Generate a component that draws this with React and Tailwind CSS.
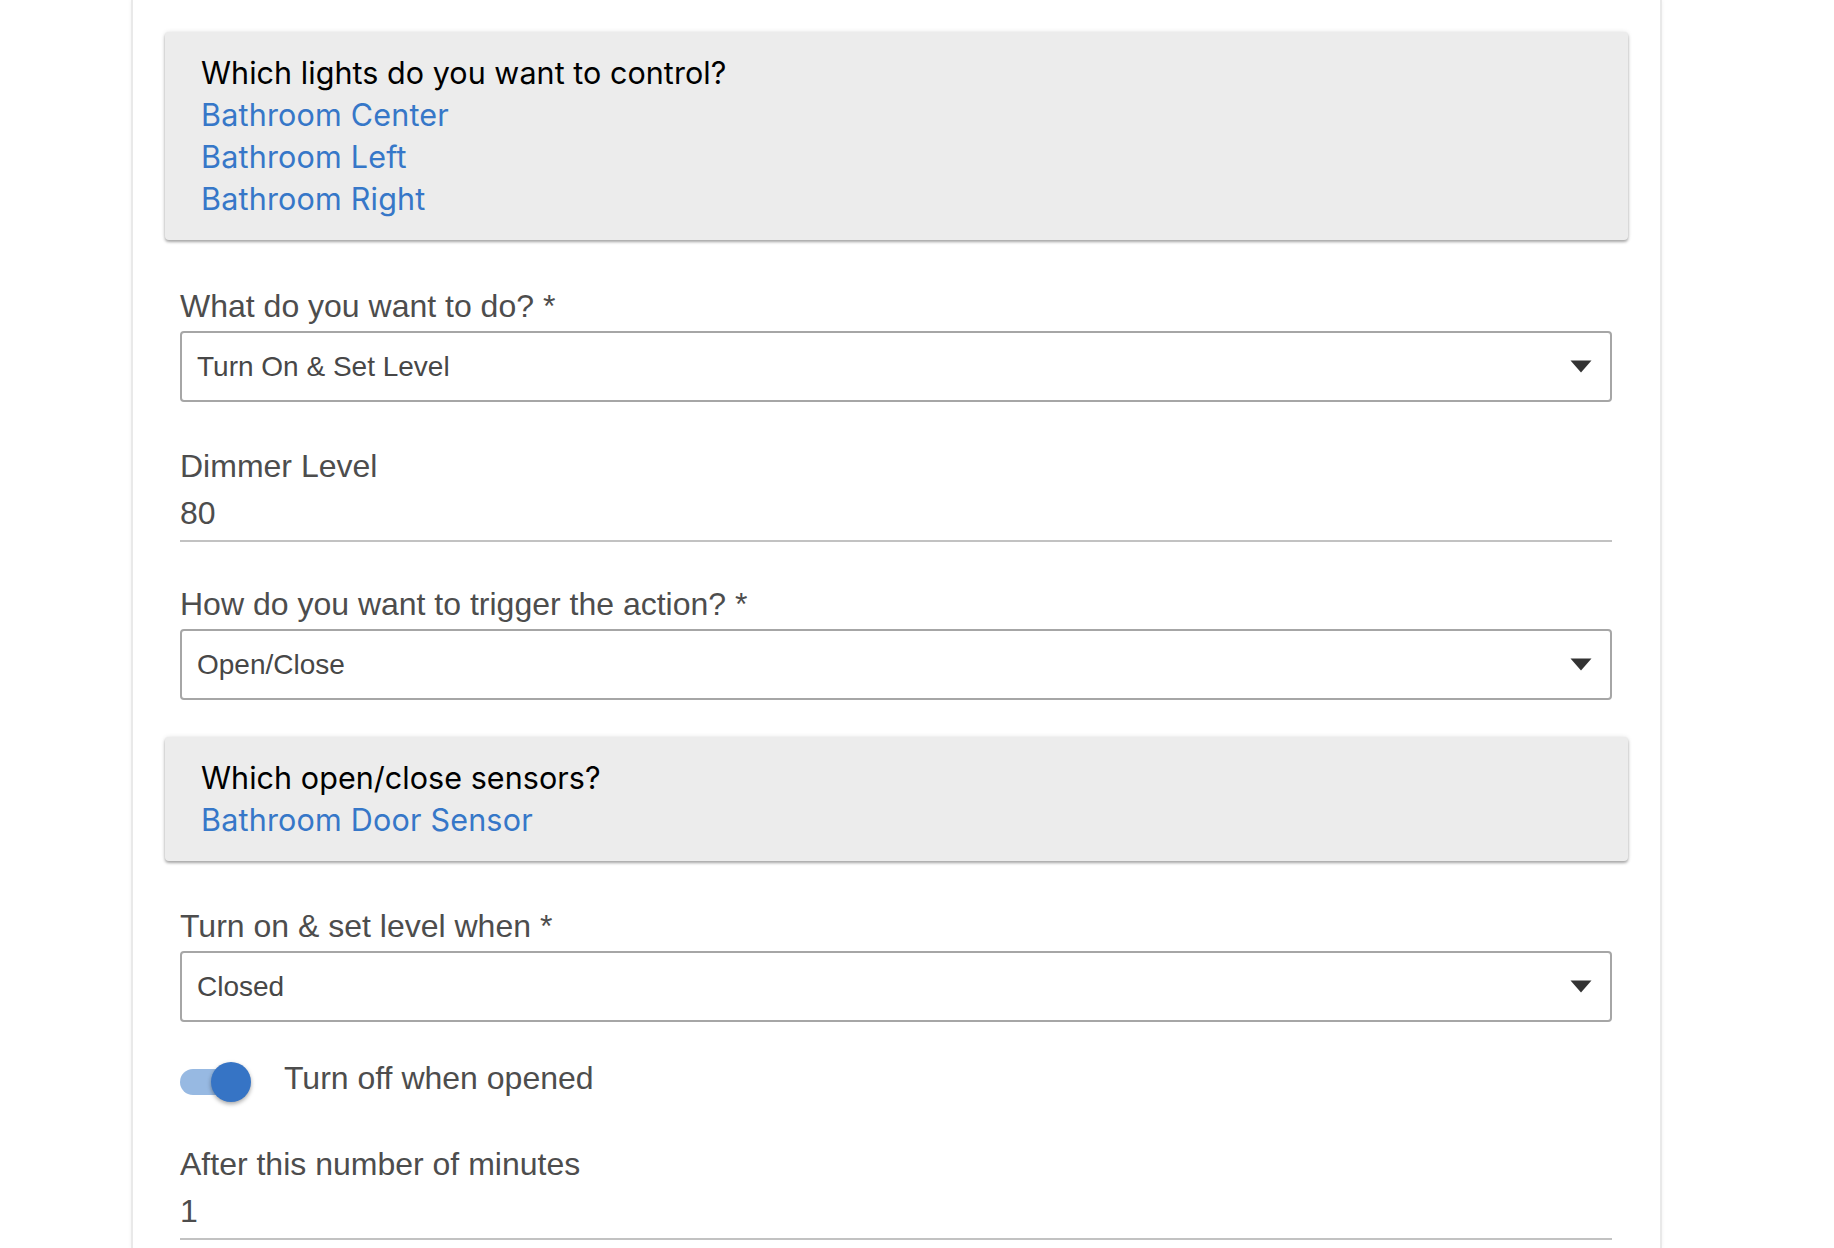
import React from "react";

const labelCls =
  "text-[32px] leading-[36px] text-[#4d4d4d] [font-family:'Liberation_Sans',Arial,sans-serif]";
const cardFont = "[font-family:Inter,'Noto_Sans',sans-serif]";

function Card({ title, items, className = "" }) {
  return (
    <div
      className={`mx-[32px] rounded-[4px] bg-[#ececec] pl-[36px] pr-[38px] pt-[20px] pb-[20px] shadow-[0_2px_3px_rgba(0,0,0,0.32),0_0_5px_rgba(0,0,0,0.1)] ${cardFont} ${className}`}
    >
      <div className="text-[30.5px] leading-[42px] tracking-[0.05px] text-black">{title}</div>
      {items.map((t) => (
        <div key={t} className="text-[30.5px] leading-[42px] tracking-[0.2px] text-[#3677c8]">
          {t}
        </div>
      ))}
    </div>
  );
}

function Select({ label, value, className = "" }) {
  return (
    <div className={`ml-[47px] mr-[48px] ${className}`}>
      <div className={labelCls}>{label}</div>
      <div className="mt-[7px] flex h-[71px] items-center justify-between rounded-[4px] border-2 border-[#a6a6a6] bg-white pl-[15px] pr-[18px]">
        <span className="text-[28px] leading-[32px] text-[#474747] [font-family:'Liberation_Sans',Arial,sans-serif]">
          {value}
        </span>
        <svg width="22" height="13" viewBox="0 0 22 13">
          <path d="M0.5 0.5 L21.5 0.5 L11 12.5 Z" fill="#333" />
        </svg>
      </div>
    </div>
  );
}

function TextField({ label, value, className = "" }) {
  return (
    <div className={`ml-[47px] mr-[48px] ${className}`}>
      <div className={labelCls}>{label}</div>
      <div className="mt-[11px] border-b-2 border-[#c2c2c2] pb-[9px]">
        <span className={labelCls}>{value}</span>
      </div>
    </div>
  );
}

export default function App() {
  return (
    <div className="h-[1248px] w-full overflow-hidden bg-white">
      <div className="ml-[131px] h-full w-[1531px] border-x-2 border-[#e9e9e9] bg-white pt-[32px] shadow-[0_0_4px_rgba(0,0,0,0.06)]">
        <Card
          title="Which lights do you want to control?"
          items={["Bathroom Center", "Bathroom Left", "Bathroom Right"]}
        />
        <Select
          className="mt-[48px]"
          label="What do you want to do? *"
          value="Turn On & Set Level"
        />
        <TextField className="mt-[46px]" label="Dimmer Level" value="80" />
        <Select
          className="mt-[44px]"
          label="How do you want to trigger the action? *"
          value="Open/Close"
        />
        <Card
          className="mt-[37px]"
          title="Which open/close sensors?"
          items={["Bathroom Door Sensor"]}
        />
        <Select
          className="mt-[47px]"
          label="Turn on & set level when *"
          value="Closed"
        />
        <div className="ml-[47px] mr-[48px] mt-[30px] flex h-[60px] items-center">
          <div className="relative h-[26px] w-[68px] shrink-0">
            <div className="h-[26px] w-[66px] rounded-full bg-[#97b9e2]" />
            <div className="absolute top-[-7px] left-[31px] h-[40px] w-[40px] rounded-full bg-[#3674c5] shadow-[0_2px_4px_rgba(0,0,0,0.35)]" />
          </div>
          <span className={`ml-[36px] mb-[8px] ${labelCls}`}>Turn off when opened</span>
        </div>
        <TextField className="mt-[34px]" label="After this number of minutes" value="1" />
      </div>
    </div>
  );
}
